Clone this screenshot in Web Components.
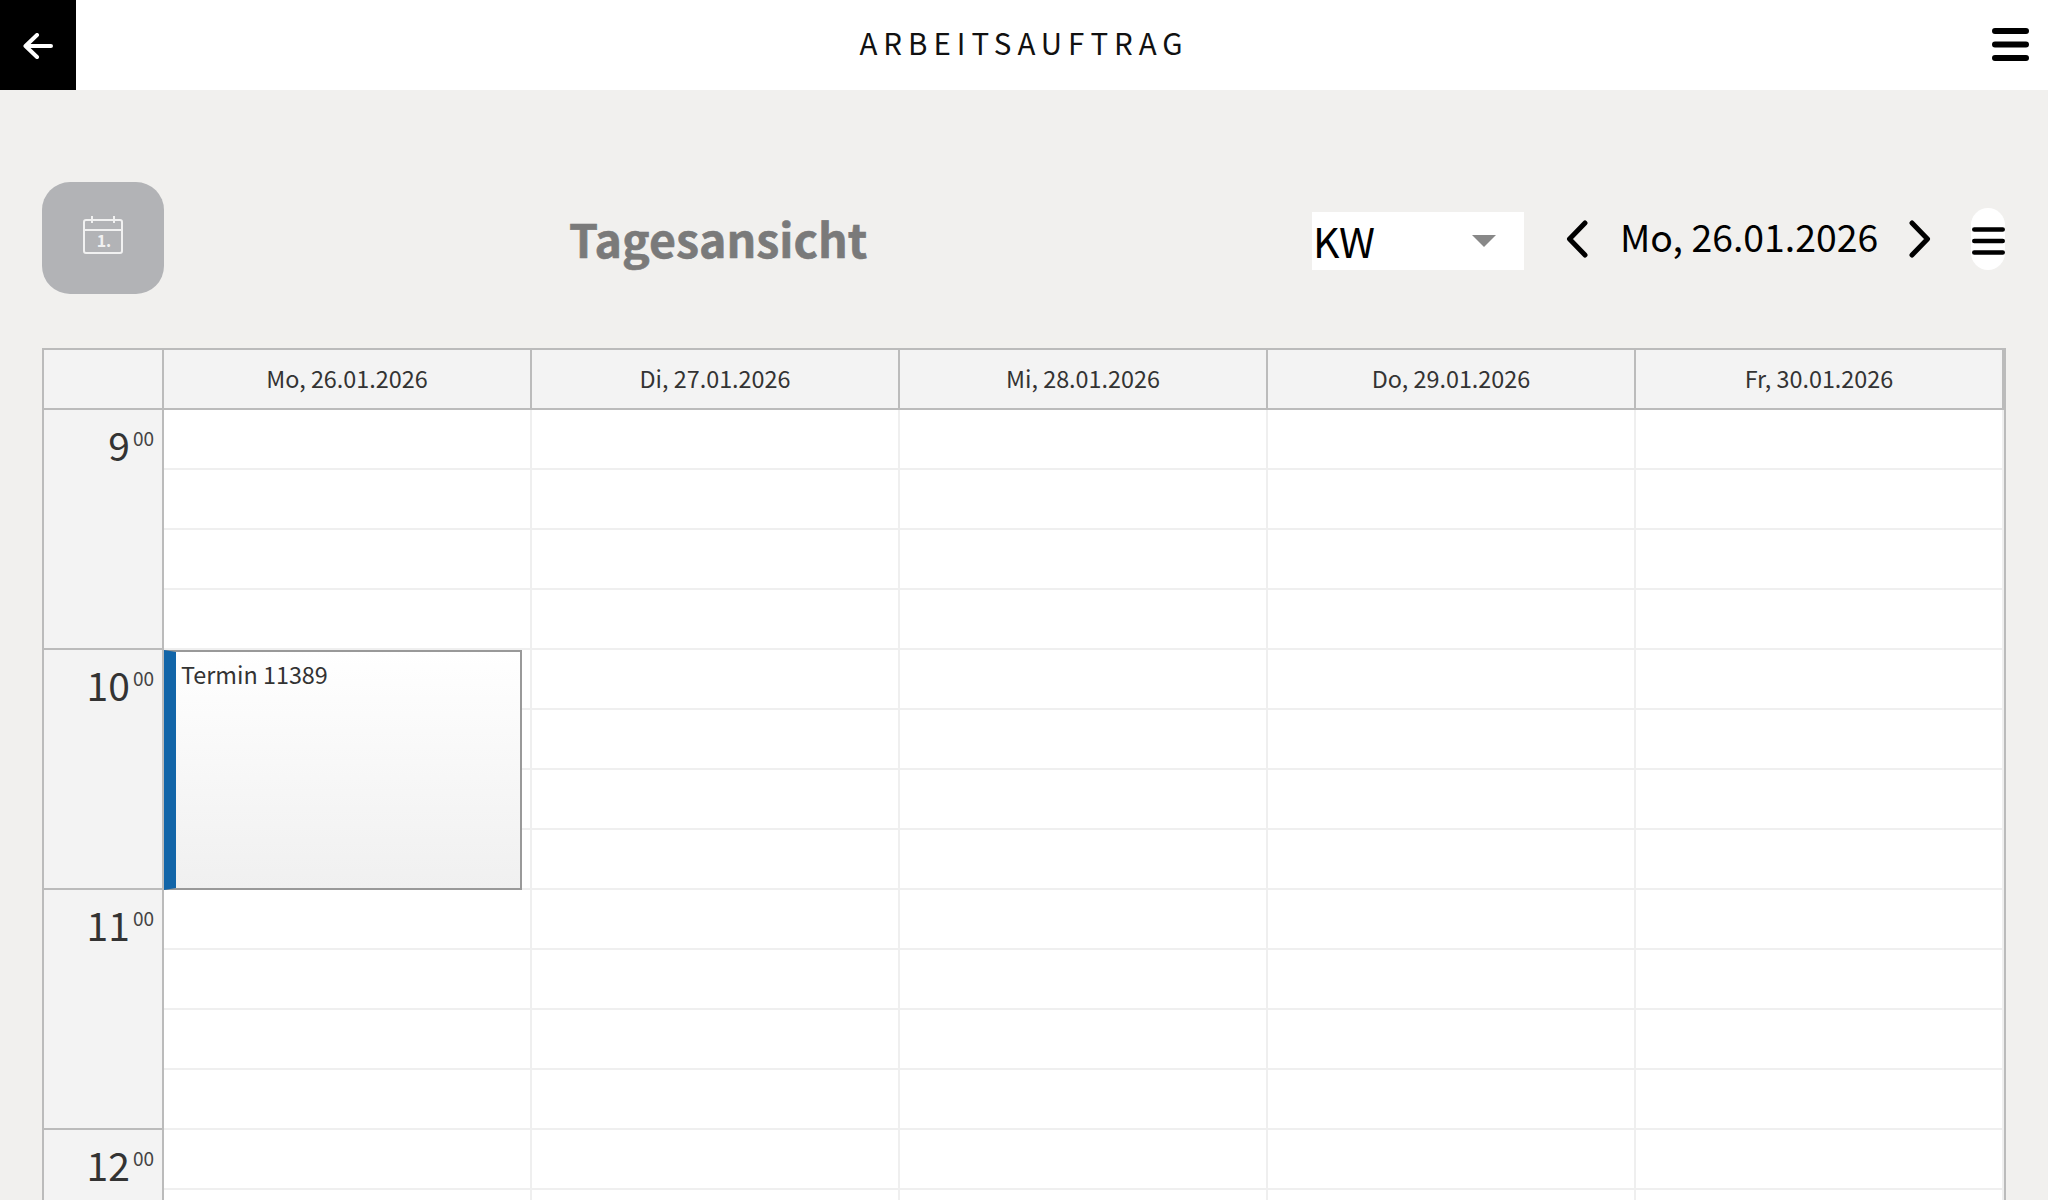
<!doctype html>
<html lang="de">
<head>
<meta charset="utf-8">
<title>Arbeitsauftrag</title>
<style>
    html, body { margin: 0; height: 1200px; overflow: hidden; }
    body {
        background: #f1f0ee;
        color: #333;
        font-family: "Noto Sans CJK JP", "Noto Sans", sans-serif;
    }
</style>
</head>
<body>
<app-header heading="ARBEITSAUFTRAG"></app-header>
<day-toolbar heading="Tagesansicht" date="Mo, 26.01.2026"></day-toolbar>
<week-calendar>
    <cal-day-head>Mo, 26.01.2026</cal-day-head>
    <cal-day-head>Di, 27.01.2026</cal-day-head>
    <cal-day-head>Mi, 28.01.2026</cal-day-head>
    <cal-day-head>Do, 29.01.2026</cal-day-head>
    <cal-day-head>Fr, 30.01.2026</cal-day-head>
    <cal-hour slot="hours" hour="9"></cal-hour>
    <cal-hour slot="hours" hour="10"><cal-event>Termin 11389</cal-event></cal-hour>
    <cal-hour slot="hours" hour="11"></cal-hour>
    <cal-hour slot="hours" hour="12"></cal-hour>
</week-calendar>

<script>
const burger = (w, h, y1, y2, y3, sw) => `
    <svg width="${w}" height="${h}" viewBox="0 0 ${w} ${h}" fill="none" stroke="#000" stroke-width="${sw}" stroke-linecap="round">
        <path d="M${sw / 2} ${y1}H${w - sw / 2}M${sw / 2} ${y2}H${w - sw / 2}M${sw / 2} ${y3}H${w - sw / 2}"/>
    </svg>`

customElements.define(
    'app-header',
    class extends HTMLElement {
        constructor() {
            super()
            this.attachShadow({ mode: 'open' })
        }

        connectedCallback() {
            this.shadowRoot.innerHTML = `
                <style>
                    :host {
                        display: grid;
                        grid-template-columns: 76px 1fr 76px;
                        align-items: center;
                        height: 90px;
                        background: #fff;
                    }
                    .back {
                        display: flex;
                        align-items: center;
                        justify-content: center;
                        height: 90px;
                        background: #000;
                    }
                    .back svg { margin-top: 2px; }
                    h1 {
                        margin: -7px 0 0;
                        text-align: center;
                        font-size: 29.5px;
                        font-weight: 400;
                        letter-spacing: 6px;
                        color: #111;
                    }
                    .menu { display: flex; justify-content: flex-end; padding-right: 19px; margin-top: -1px; }
                </style>
                <div class="back">
                    <svg width="30" height="26" viewBox="0 0 30 26" fill="none" stroke="#fff" stroke-width="4" stroke-linecap="round" stroke-linejoin="round">
                        <path d="M28 13H3M14 2 2.5 13 14 24"/>
                    </svg>
                </div>
                <h1>${this.getAttribute('heading')}</h1>
                <div class="menu">${burger(37, 34, 3, 16.5, 30, 6)}</div>
            `
        }
    }
)

customElements.define(
    'day-toolbar',
    class extends HTMLElement {
        constructor() {
            super()
            this.attachShadow({ mode: 'open' })
        }

        connectedCallback() {
            this.shadowRoot.innerHTML = `
                <style>
                    :host {
                        display: flex;
                        align-items: center;
                        height: 112px;
                        padding: 92px 0 54px 42px;
                        color: #000;
                    }
                    .view {
                        display: flex;
                        align-items: center;
                        justify-content: center;
                        flex: none;
                        width: 122px;
                        height: 112px;
                        border-radius: 28px;
                        background: #b2b3b6;
                    }
                    .view svg { margin-top: -7px; }
                    h2 {
                        flex: none;
                        width: 743px;
                        margin: -2px 0 0 405px;
                        font-size: 46.5px;
                        font-weight: 700;
                        color: #7a7a7a;
                        -webkit-text-stroke: .6px #7a7a7a;
                    }
                    .select {
                        display: flex;
                        align-items: center;
                        justify-content: space-between;
                        box-sizing: border-box;
                        flex: none;
                        width: 212px;
                        height: 58px;
                        margin-top: 6px;
                        padding: 0 28px 2px 1px;
                        background: #fff;
                        font-size: 41px;
                    }
                    .tri {
                        width: 0;
                        height: 0;
                        margin-top: 2px;
                        border: 12px solid transparent;
                        border-top: 12px solid #888;
                        border-bottom: 0;
                    }
                    .prev { margin: 2px 0 0 42px; display: flex; }
                    .date { flex: none; width: 256px; margin: -5px 33px 0 32px; font-size: 37.4px; white-space: nowrap; }
                    .next { display: flex; margin-top: 2px; }
                    .more {
                        display: flex;
                        align-items: center;
                        flex: none;
                        box-sizing: border-box;
                        width: 34px;
                        height: 62px;
                        margin: 2px 0 0 40px;
                        padding: 4px 0 0 1px;
                        border-radius: 17px;
                        background: #fff;
                    }
                </style>
                <div class="view">
                    <svg width="44" height="40" viewBox="0 0 44 40" fill="none" stroke="#f1f1f1" stroke-width="2" stroke-linejoin="round">
                        <rect x="3" y="5" width="38" height="33" rx="2"/>
                        <path d="M3 15H41M11 1V8M33 1V8"/>
                        <text x="23" y="32" text-anchor="middle" font-size="16" font-weight="700" fill="#f1f1f1" stroke="none">1.</text>
                    </svg>
                </div>
                <h2>${this.getAttribute('heading')}</h2>
                <div class="select"><span>KW</span><span class="tri"></span></div>
                <div class="prev">
                    <svg width="22" height="38" viewBox="0 0 22 38" fill="none" stroke="#000" stroke-width="5" stroke-linecap="round" stroke-linejoin="round">
                        <path d="M19 3 3.5 19 19 35"/>
                    </svg>
                </div>
                <div class="date">${this.getAttribute('date')}</div>
                <div class="next">
                    <svg width="22" height="38" viewBox="0 0 22 38" fill="none" stroke="#000" stroke-width="5" stroke-linecap="round" stroke-linejoin="round">
                        <path d="M3 3 18.5 19 3 35"/>
                    </svg>
                </div>
                <div class="more">${burger(33, 28, 2.5, 14, 25.5, 4.6)}</div>
            `
        }
    }
)

customElements.define(
    'week-calendar',
    class extends HTMLElement {
        constructor() {
            super()
            this.attachShadow({ mode: 'open' })
        }

        connectedCallback() {
            this.shadowRoot.innerHTML = `
                <style>
                    :host {
                        display: block;
                        box-sizing: border-box;
                        width: 1964px;
                        margin-left: 42px;
                        border: 2px solid #bbb;
                        border-bottom: 0;
                        background: #fff;
                    }
                    .head {
                        display: grid;
                        grid-template-columns: 120px repeat(5, 368px);
                        height: 60px;
                    }
                    .corner {
                        box-sizing: border-box;
                        border-right: 2px solid #bbb;
                        border-bottom: 2px solid #bbb;
                        background: #f3f3f3;
                    }
                </style>
                <div class="head"><div class="corner"></div><slot></slot></div>
                <slot name="hours"></slot>
            `
        }
    }
)

customElements.define(
    'cal-day-head',
    class extends HTMLElement {
        constructor() {
            super()
            this.attachShadow({ mode: 'open' })
            this.shadowRoot.innerHTML = `
                <style>
                    :host {
                        display: flex;
                        align-items: center;
                        justify-content: center;
                        box-sizing: border-box;
                        padding-bottom: 3px;
                        border-right: 2px solid #bbb;
                        border-bottom: 2px solid #bbb;
                        background: #f3f3f3;
                        font-size: 23.4px;
                        color: #333;
                    }
                </style>
                <slot></slot>
            `
        }
    }
)

customElements.define(
    'cal-hour',
    class extends HTMLElement {
        constructor() {
            super()
            this.attachShadow({ mode: 'open' })
        }

        connectedCallback() {
            const day = `<div class="day">${'<div class="quarter"></div>'.repeat(4)}</div>`
            this.shadowRoot.innerHTML = `
                <style>
                    :host {
                        display: grid;
                        grid-template-columns: 120px repeat(5, 368px);
                        height: 240px;
                    }
                    .time {
                        display: flex;
                        justify-content: flex-end;
                        gap: 3px;
                        box-sizing: border-box;
                        padding: 8px 8px 0 0;
                        border-right: 2px solid #bbb;
                        border-bottom: 2px solid #bbb;
                        background: #f3f3f3;
                        color: #333;
                    }
                    .h { font-size: 39px; line-height: 52px; }
                    .m { font-size: 19px; line-height: 40px; color: #444; }
                    .day { position: relative; box-sizing: border-box; border-right: 2px solid #efefef; }
                    .quarter { box-sizing: border-box; height: 60px; border-bottom: 2px solid #efefef; }
                </style>
                <div class="time"><span class="h">${this.getAttribute('hour')}</span><span class="m">00</span></div>
                <div class="day"><slot></slot>${'<div class="quarter"></div>'.repeat(4)}</div>
                ${day.repeat(4)}
            `
        }
    }
)

customElements.define(
    'cal-event',
    class extends HTMLElement {
        constructor() {
            super()
            this.attachShadow({ mode: 'open' })
            this.shadowRoot.innerHTML = `
                <style>
                    :host {
                        position: absolute;
                        top: 0;
                        left: 0;
                        box-sizing: border-box;
                        width: 358px;
                        height: 240px;
                        padding: 6px 0 0 5px;
                        border: 2px solid #999;
                        border-left: 12px solid #1265a8;
                        background: linear-gradient(#fff, #f0f0f0);
                        font-size: 23.4px;
                        line-height: 32px;
                        color: #333;
                    }
                </style>
                <slot></slot>
            `
        }
    }
)
</script>
</body>
</html>
